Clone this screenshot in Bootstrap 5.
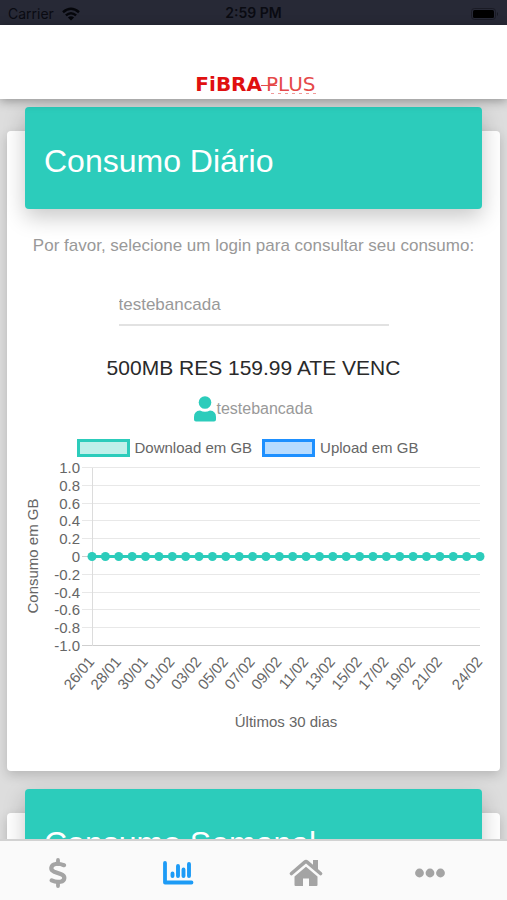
<!DOCTYPE html>
<html lang="pt-BR">
<head>
<meta charset="utf-8">
<meta name="viewport" content="width=device-width, initial-scale=1">
<title>FibraPlus - Consumo</title>
<link href="https://cdn.jsdelivr.net/npm/bootstrap@5.3.0/dist/css/bootstrap.min.css" rel="stylesheet">
<style>
  body { font-family: "Liberation Sans", Arial, sans-serif; background: #dddddd; color: #999; }
  .status-bar { background: #272936; color: #0a0b12; height: 25px; padding: 2px 8px 0; font: 14px/22px Inter, sans-serif; }
  .status-bar svg { display: block; }
  .brand-bar { height: 74px; box-shadow: 0 2px 10px rgba(0,0,0,.35); z-index: 2; }
  .feed { min-height: 0; padding: 32px 7px 0; }
  .panel { display: flow-root; background: #fff; border-radius: 4px; margin-bottom: 42px; box-shadow: 0 4px 12px rgba(0,0,0,.18); }
  .panel-title { background: #2cccbb; color: #fff; border-radius: 4px; margin: -24px 18px 0; padding: 34px 19px 28px; box-shadow: 0 8px 22px rgba(0,0,0,.22); }
  .panel-title h1, .panel-title h2 { font-size: 32px; line-height: 40px; margin: 0; font-weight: 400; }
  .prompt { font-size: 17px; line-height: 24px; margin-top: 25px; }
  .login-select { width: 270px; height: 44px; margin-top: 24px; font-size: 17px; color: #999; background: #fff; border: 0; border-bottom: 2px solid #e2e2e2; border-radius: 0; appearance: none; padding: 4px 0 0; }
  .plan { font-size: 21px; line-height: 28px; color: #2a2a2a; margin: 28px 0 0; }
  .user-row { font-size: 16px; line-height: 26px; margin-top: 14px; }
  .legend-row { font-size: 15px; line-height: 18px; color: #666; gap: 10px; margin-top: 17px; padding-right: 12px; }
  .swatch { width: 53px; height: 18px; border: 3px solid #2cccbb; background: #bff0ea; margin-right: 5px; }
  .swatch-up { border-color: #1e90ff; background: #b8dcff; }
  .plot { display: block; width: 100%; margin-bottom: 31px; }
  .plot text { font-size: 15px; fill: #666; }
  .tab-bar { background: #fafafa; border-top: 2px solid #d2d2d2; height: 61px; z-index: 2; }
  .tab-list { margin: 0 15px 0 -4px; padding-top: 4px; }
  .tab-list a { color: #a4a4a4; }
  .tab-list a.active { color: #1d9bf6; }
</style>
<script src="https://cdn.jsdelivr.net/npm/bootstrap@5.3.0/dist/js/bootstrap.bundle.min.js"></script>
</head>
<body class="vh-100 d-flex flex-column overflow-hidden">

<div class="status-bar row g-0 flex-shrink-0">
  <div class="col d-flex align-items-center gap-2">Carrier
    <svg width="18" height="14" viewBox="0 0 18 14" fill="none" stroke="#05060b" stroke-width="2.5" aria-hidden="true"><path d="M1 5.2Q9-1.6 17 5.2M3.9 8.4Q9 4 14.1 8.4"/><path d="M9 13.5 5.9 10.4Q9 7.9 12.1 10.4Z" fill="#05060b" stroke="none"/></svg>
  </div>
  <div class="col-auto fw-semibold">2:59 PM</div>
  <div class="col d-flex align-items-center justify-content-end">
    <svg width="28" height="12" viewBox="0 0 28 12" aria-hidden="true"><rect x=".5" y=".5" width="24" height="11" rx="3" fill="none" stroke="#1a1b25"/><rect x="2" y="2" width="21" height="8" rx="1.5" fill="#000"/><path d="M26 4q2 2 0 4z" fill="#15161f"/></svg>
  </div>
</div>

<header class="brand-bar bg-white d-flex align-items-end justify-content-center flex-shrink-0 position-relative">
  <svg width="148" height="30" viewBox="0 0 148 30" fill="#e01010" role="img" aria-label="FiBRA PLUS" font-family="DejaVu Sans, sans-serif" font-size="20">
    <text x="82" y="22" text-anchor="end" font-weight="700">FiBRA</text>
    <text x="86" y="22" fill="#e54a4a">PLUS</text>
    <path d="M81 16.5H97" stroke="#e54a4a"/>
    <path d="M91 24.5H136" stroke="#f09a9a" stroke-dasharray="3 4"/>
  </svg>
</header>

<main class="feed flex-grow-1 overflow-hidden">
  <section class="panel">
    <div class="panel-title"><h1>Consumo Diário</h1></div>
    <div class="d-flex flex-column align-items-center">
      <label class="prompt text-center" for="login">Por favor, selecione um login para consultar seu consumo:</label>
      <select class="login-select" id="login"><option>testebancada</option></select>
      <h2 class="plan fw-normal">500MB RES 159.99 ATE VENC</h2>
      <div class="user-row d-flex align-items-center">
        <svg width="22" height="26" viewBox="0 0 22 26" fill="#2cccbb" aria-hidden="true"><circle cx="11" cy="6.5" r="6.3"/><path d="M6 14.5Q11 17 16 14.5Q22 15 22 21V23.5Q22 25.5 20 25.5H2Q0 25.5 0 23.5V21Q0 15 6 14.5Z"/></svg>
        <span>testebancada</span>
      </div>
      <div class="legend-row d-flex justify-content-center">
        <span class="d-flex"><span class="swatch"></span>Download em GB</span>
        <span class="d-flex"><span class="swatch swatch-up"></span>Upload em GB</span>
      </div>
    </div>
    <svg class="plot" viewBox="0 0 493 283" role="img" aria-label="Consumo em GB nos últimos 30 dias">
      <g id="grid" stroke="#e8e8e8"></g>
      <g id="yLabels" text-anchor="end"></g>
      <g id="xLabels" text-anchor="end"></g>
      <g id="series" fill="#2cccbb"></g>
      <text transform="translate(31 99) rotate(-90)" text-anchor="middle">Consumo em GB</text>
      <text x="279" y="270" text-anchor="middle">Últimos 30 dias</text>
    </svg>
  </section>

  <section class="panel">
    <div class="panel-title"><h2>Consumo Semanal</h2></div>
  </section>
</main>

<nav class="tab-bar flex-shrink-0 position-relative" aria-label="Principal">
  <div class="tab-list row g-0 h-100">
    <a class="col d-flex align-items-center justify-content-center" href="#" aria-label="Faturas">
      <svg width="18" height="30" viewBox="0 0 18 30" fill="none" stroke="currentColor" stroke-linecap="round" stroke-linejoin="round"><path d="M9 2v4M9 24v4" stroke-width="3.8"/><path d="M15 7.2C11 5.6 8.5 5.5 6.5 6 1.5 7 .9 12 5.2 13.7l7 2.5c4.5 1.6 4 6.6-.7 7.5-3 .6-6 .1-8.8-1.3" stroke-width="4.2"/></svg>
    </a>
    <a class="col d-flex align-items-center justify-content-center active" href="#" aria-label="Consumo" aria-current="page">
      <svg width="38" height="24" viewBox="0 0 38 24" fill="none" stroke="currentColor" stroke-linecap="round" stroke-linejoin="round"><path d="M2 2V21.5H28.5" stroke-width="3.8"/><path d="M9.5 12.5V15M15 5V15M20.5 8.5V15M26 3V15" stroke-width="3.9"/></svg>
    </a>
    <a class="col d-flex align-items-center justify-content-center" href="#" aria-label="Início">
      <svg width="34" height="28" viewBox="0 0 34 28" fill="currentColor"><path d="M2.5 14.5 15.8 3.2q1.2-1 2.4 0L31.5 14.5" fill="none" stroke="currentColor" stroke-width="3.6" stroke-linecap="round"/><path d="M24 1h5v12L24 8.500zM17 7.800 28.500 17.500V26q0 1-1 1h-7.500v-7.500h-6V27H6.500q-1 0-1-1v-8.500z"/></svg>
    </a>
    <a class="col d-flex align-items-center justify-content-center" href="#" aria-label="Mais">
      <svg width="30" height="10" viewBox="0 0 30 10" fill="currentColor"><circle cx="4.5" cy="5" r="4.4"/><circle cx="15" cy="5" r="4.4"/><circle cx="25.5" cy="5" r="4.4"/></svg>
    </a>
  </div>
</nav>

<script>
  const SVG = "http://www.w3.org/2000/svg";
  const add = (id, tag, attrs, text) => {
    const el = document.createElementNS(SVG, tag);
    for (const k in attrs) el.setAttribute(k, attrs[k]);
    if (text) el.textContent = text;
    document.getElementById(id).appendChild(el);
  };
  const left = 85, right = 473, top0 = 11, bottom = 189;
  const ticks = ["1.0", "0.8", "0.6", "0.4", "0.2", "0", "-0.2", "-0.4", "-0.6", "-0.8", "-1.0"];
  ticks.forEach((t, i) => {
    const y = top0 + Math.round(i * (bottom - top0) / 10) - 0.5;
    add("grid", "path", { d: `M75 ${y}H${right}`, stroke: i === 10 || i === 5 ? "#cfcfcf" : "#e8e8e8" });
    add("yLabels", "text", { x: 73, y: y + 5 }, t);
  });
  add("grid", "path", { d: `M${left + 0.5} ${top0}V${bottom}`, stroke: "#dcdcdc" });

  const days = 30, step = (right - left) / (days - 1), mid = (top0 + bottom - 1) / 2;
  add("series", "path", { d: `M${left} ${mid}H${right}`, stroke: "#2cccbb", "stroke-width": 3 });
  for (let i = 0; i < days; i++) {
    const x = left + i * step;
    add("series", "circle", { cx: x, cy: mid, r: 4.5 });
    if ((i % 2 === 0 && i < 28) || i === days - 1) {
      const d = new Date(2023, 0, 26 + i);
      const label = String(d.getDate()).padStart(2, "0") + "/" + String(d.getMonth() + 1).padStart(2, "0");
      add("xLabels", "text", { transform: `translate(${x + 3} 205) rotate(-50)` }, label);
    }
  }
</script>
</body>
</html>
